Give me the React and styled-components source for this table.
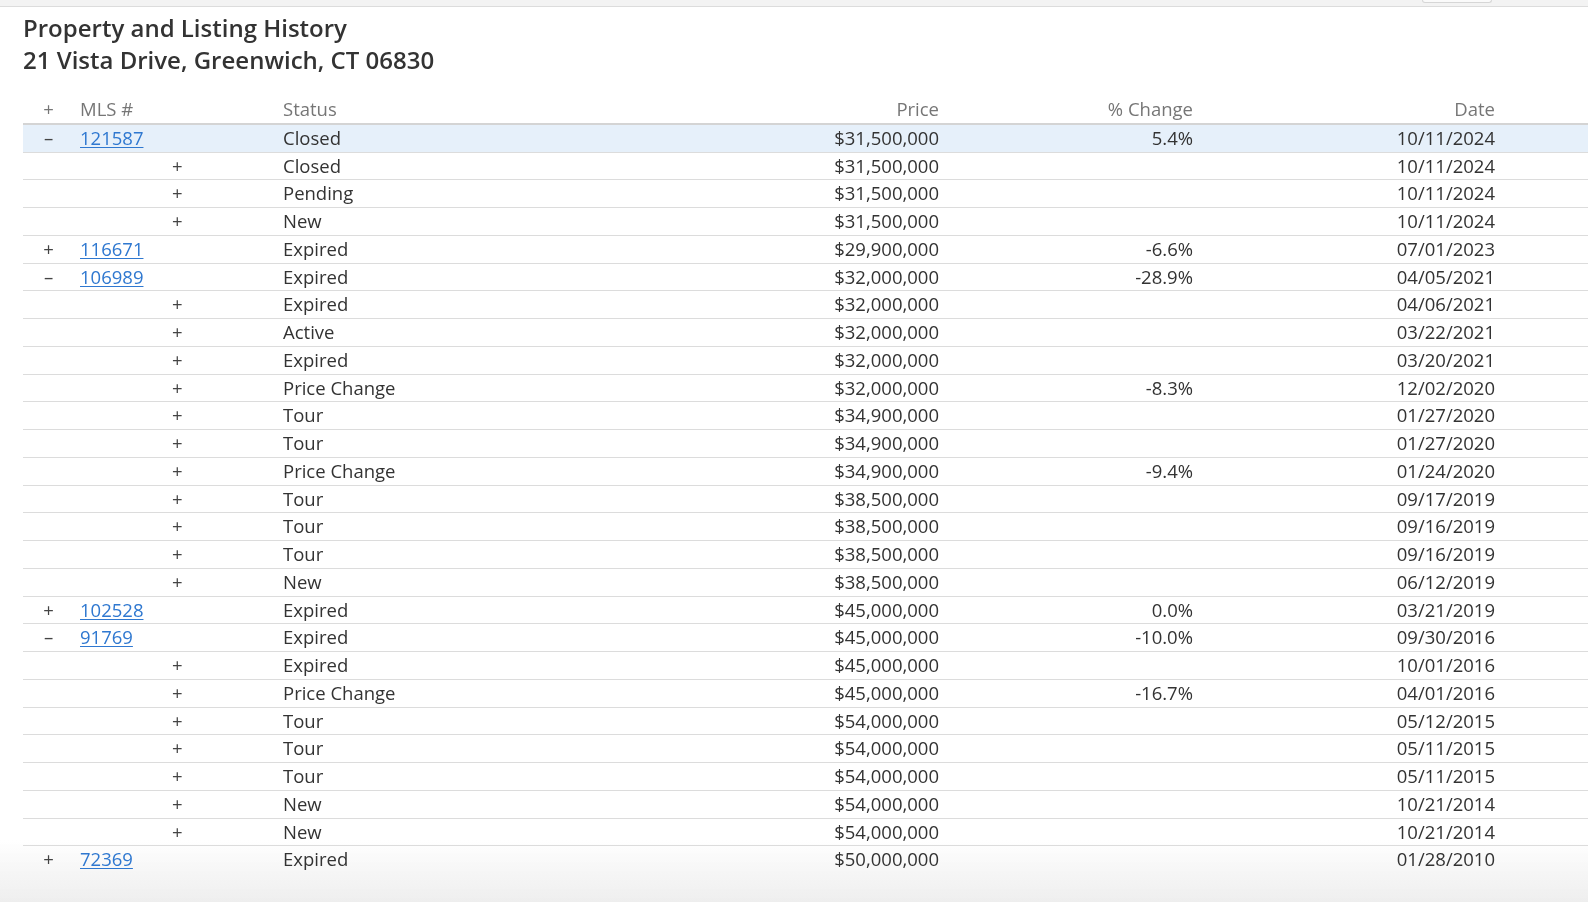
import { useState } from 'react'
import styled, { createGlobalStyle } from 'styled-components'

const GlobalStyle = createGlobalStyle`
  html {
    background: #fff;
  }
  body {
    margin: 0;
    padding: 0;
    background: transparent;
    font-family: 'Open Sans', 'Noto Sans', sans-serif;
    color: #333;
  }
`

const TopBar = styled.div`
  height: 6px;
  background: #f3f3f3;
  border-bottom: 1px solid #dcdcdc;
  display: flex;
  justify-content: flex-end;
  padding-right: 96px;
`

const TabStub = styled.div`
  width: 68px;
  height: 2px;
  background: #fafafa;
  border: 1px solid #d6d6d6;
  border-top: none;
  border-radius: 0 0 5px 5px;
`

const Page = styled.div`
  padding: 5px 0 0 23px;
`

const Heading = styled.h1`
  margin: 0;
  font-size: 24px;
  line-height: 31.5px;
  font-weight: 600;
  color: #333;
`

const Table = styled.table`
  margin-top: 21px;
  width: 1565px;
  border-collapse: collapse;
  table-layout: fixed;
  font-size: 18.5px;
  line-height: 26.75px;
`

const HeadCell = styled.th`
  height: 25px;
  padding: 0 6px;
  font-weight: 400;
  color: #767676;
  text-align: ${p => p.$align || 'left'};
  border-bottom: 2px solid #d4d4d4;
  white-space: nowrap;
`

const Row = styled.tr`
  background: ${p => (p.$active ? '#e6f0fa' : 'transparent')};
  border-bottom: ${p => (p.$last ? 'none' : '1px solid #dcdcdc')};
`

const Cell = styled.td`
  padding: 0 6px;
  height: 26.75px;
  text-align: ${p => p.$align || 'left'};
  white-space: nowrap;
  color: #333;
`

const Toggle = styled.td`
  padding: 0;
  text-align: center;
  color: #444;
  cursor: pointer;
  user-select: none;
`

const SubToggle = styled.td`
  padding: 0 0 0 22px;
  color: #444;
`

const MlsLink = styled.a`
  color: #2f78d0;
  text-decoration: underline;
  text-underline-offset: 2px;
`

const Fade = styled.div`
  position: fixed;
  z-index: -1;
  left: 0;
  right: 0;
  bottom: 0;
  height: 62px;
  background: linear-gradient(to bottom, rgba(240, 240, 240, 0), #eeeeee);
  pointer-events: none;
`

const listings = [
  {
    mls: '121587', status: 'Closed', price: '$31,500,000', change: '5.4%', date: '10/11/2024',
    open: true, active: true,
    events: [
      ['Closed', '$31,500,000', '', '10/11/2024'],
      ['Pending', '$31,500,000', '', '10/11/2024'],
      ['New', '$31,500,000', '', '10/11/2024'],
    ],
  },
  {
    mls: '116671', status: 'Expired', price: '$29,900,000', change: '-6.6%', date: '07/01/2023',
    open: false, events: [],
  },
  {
    mls: '106989', status: 'Expired', price: '$32,000,000', change: '-28.9%', date: '04/05/2021',
    open: true,
    events: [
      ['Expired', '$32,000,000', '', '04/06/2021'],
      ['Active', '$32,000,000', '', '03/22/2021'],
      ['Expired', '$32,000,000', '', '03/20/2021'],
      ['Price Change', '$32,000,000', '-8.3%', '12/02/2020'],
      ['Tour', '$34,900,000', '', '01/27/2020'],
      ['Tour', '$34,900,000', '', '01/27/2020'],
      ['Price Change', '$34,900,000', '-9.4%', '01/24/2020'],
      ['Tour', '$38,500,000', '', '09/17/2019'],
      ['Tour', '$38,500,000', '', '09/16/2019'],
      ['Tour', '$38,500,000', '', '09/16/2019'],
      ['New', '$38,500,000', '', '06/12/2019'],
    ],
  },
  {
    mls: '102528', status: 'Expired', price: '$45,000,000', change: '0.0%', date: '03/21/2019',
    open: false, events: [],
  },
  {
    mls: '91769', status: 'Expired', price: '$45,000,000', change: '-10.0%', date: '09/30/2016',
    open: true,
    events: [
      ['Expired', '$45,000,000', '', '10/01/2016'],
      ['Price Change', '$45,000,000', '-16.7%', '04/01/2016'],
      ['Tour', '$54,000,000', '', '05/12/2015'],
      ['Tour', '$54,000,000', '', '05/11/2015'],
      ['Tour', '$54,000,000', '', '05/11/2015'],
      ['New', '$54,000,000', '', '10/21/2014'],
      ['New', '$54,000,000', '', '10/21/2014'],
    ],
  },
  {
    mls: '72369', status: 'Expired', price: '$50,000,000', change: '', date: '01/28/2010',
    open: false, events: [],
  },
]

export default function App() {
  const [open, setOpen] = useState(() => listings.map(l => l.open))

  const flip = i => setOpen(o => o.map((v, j) => (j === i ? !v : v)))

  return (
    <>
      <GlobalStyle />
      <TopBar>
        <TabStub />
      </TopBar>
      <Page>
        <Heading>
          Property and Listing History
          <br />
          21 Vista Drive, Greenwich, CT 06830
        </Heading>
        <Table>
          <colgroup>
            <col style={{ width: 51 }} />
            <col style={{ width: 76 }} />
            <col style={{ width: 127 }} />
            <col style={{ width: 423 }} />
            <col style={{ width: 245 }} />
            <col style={{ width: 254 }} />
            <col style={{ width: 302 }} />
            <col />
          </colgroup>
          <thead>
            <tr>
              <HeadCell $align="center">+</HeadCell>
              <HeadCell>MLS #</HeadCell>
              <HeadCell />
              <HeadCell>Status</HeadCell>
              <HeadCell $align="right">Price</HeadCell>
              <HeadCell $align="right">% Change</HeadCell>
              <HeadCell $align="right">Date</HeadCell>
              <HeadCell />
            </tr>
          </thead>
          <tbody>
            {listings.map((l, i) => {
              const isLast = i === listings.length - 1
              return [
                <Row key={l.mls} $active={l.active} $last={isLast && !open[i]}>
                  <Toggle onClick={() => flip(i)}>{open[i] ? '–' : '+'}</Toggle>
                  <Cell>
                    <MlsLink href="#">{l.mls}</MlsLink>
                  </Cell>
                  <Cell />
                  <Cell>{l.status}</Cell>
                  <Cell $align="right">{l.price}</Cell>
                  <Cell $align="right">{l.change}</Cell>
                  <Cell $align="right">{l.date}</Cell>
                  <Cell />
                </Row>,
                ...(open[i]
                  ? l.events.map((e, k) => (
                      <Row key={l.mls + '-' + k}>
                        <Cell />
                        <Cell />
                        <SubToggle>+</SubToggle>
                        <Cell>{e[0]}</Cell>
                        <Cell $align="right">{e[1]}</Cell>
                        <Cell $align="right">{e[2]}</Cell>
                        <Cell $align="right">{e[3]}</Cell>
                        <Cell />
                      </Row>
                    ))
                  : []),
              ]
            })}
          </tbody>
        </Table>
      </Page>
      <Fade />
    </>
  )
}
